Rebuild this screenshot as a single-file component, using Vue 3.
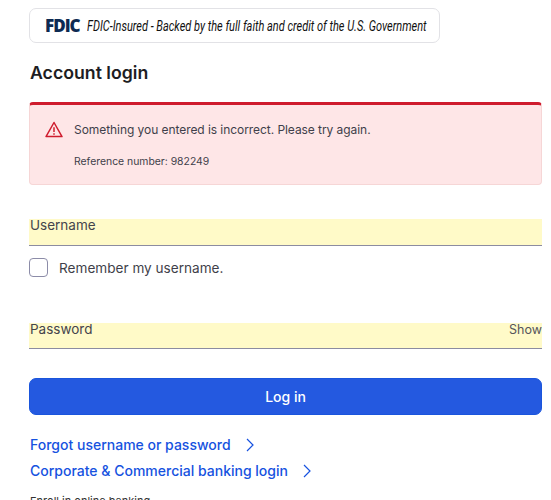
<template>
  <div class="page">
    <div class="fdic-banner">
      <span class="fdic-logo">FDIC</span>
      <span class="fdic-text">FDIC-Insured - Backed by the full faith and credit of the U.S. Government</span>
    </div>

    <h1 class="title">Account login</h1>

    <div class="alert">
      <svg class="alert-icon" width="18" height="17" viewBox="0 0 18 17" fill="none">
        <path d="M9 1.5L17 15.6H1L9 1.5Z" stroke="#cf1c2e" stroke-width="1.5" stroke-linejoin="round" />
        <path d="M9 6.2V11" stroke="#cf1c2e" stroke-width="1.5" />
        <path d="M9 12.2V13.8" stroke="#cf1c2e" stroke-width="1.5" />
      </svg>
      <div class="alert-body">
        <p class="alert-msg">{{ errorMessage }}</p>
        <p class="alert-ref">Reference number: {{ referenceNumber }}</p>
      </div>
    </div>

    <div class="field">
      <span class="field-label">Username</span>
    </div>

    <label class="remember">
      <span class="check"></span>
      <span>Remember my username.</span>
    </label>

    <div class="field field-password">
      <span class="field-label">Password</span>
      <span class="show">Show</span>
    </div>

    <button class="login-btn" type="button">Log in</button>

    <div class="links">
      <a v-for="link in links" :key="link" class="link" href="#" @click.prevent>
        {{ link }}
        <svg width="8" height="14" viewBox="0 0 8 14" fill="none">
          <path d="M1 1L7 7L1 13" stroke="currentColor" stroke-width="1.2" />
        </svg>
      </a>
    </div>

    <p class="enroll">Enroll in online banking</p>
  </div>
</template>

<script setup>
const errorMessage = "Something you entered is incorrect. Please try again.";
const referenceNumber = "982249";
const links = ["Forgot username or password", "Corporate & Commercial banking login"];
</script>

<style>
html,
body {
  margin: 0;
  height: 500px;
  overflow: hidden;
  background: #fff;
}
</style>

<style scoped>
.page {
  width: 513px;
  height: 500px;
  overflow: hidden;
  box-sizing: border-box;
  margin-left: 29px;
  padding-top: 8px;
  font-family: Inter, "Liberation Sans", sans-serif;
  color: #3f3f4a;
}

.fdic-banner {
  width: 411px;
  height: 35px;
  box-sizing: border-box;
  border: 1px solid #e2e2e6;
  border-radius: 7px;
  display: flex;
  align-items: center;
  padding-left: 15px;
  gap: 7px;
}
.fdic-logo {
  font-family: "Open Sans", sans-serif;
  font-weight: 800;
  font-size: 17px;
  letter-spacing: -1px;
  color: #0d2a52;
}
.fdic-text {
  font-family: Roboto, "Liberation Sans", sans-serif;
  font-style: italic;
  font-size: 14px;
  color: #111;
  white-space: nowrap;
  display: inline-block;
  transform: scaleX(0.785);
  transform-origin: left center;
}

.title {
  margin: 18px 0 0;
  padding-left: 1px;
  font-size: 17.7px;
  line-height: 24px;
  font-weight: 600;
  color: #1d1d22;
}

.alert {
  margin-top: 17px;
  height: 83px;
  box-sizing: border-box;
  background: #fee6e7;
  border: 1px solid #f6d6d6;
  border-top: 3px solid #cf1c2e;
  border-radius: 4px;
  display: flex;
  padding: 15px 15px 0;
  gap: 11px;
}
.alert-icon {
  flex: none;
  margin-top: 1px;
}
.alert-body p {
  margin: 0;
  white-space: nowrap;
}
.alert-msg {
  font-size: 12px;
  letter-spacing: -0.06px;
  line-height: 20px;
}
.alert-ref {
  padding-top: 15px;
  font-size: 10.4px;
  line-height: 14px;
}

.field {
  margin-top: 34px;
  height: 27px;
  box-sizing: border-box;
  background: #fffac8;
  border-bottom: 1px solid #8c8ca0;
  display: flex;
  justify-content: space-between;
  font-size: 13.5px;
  line-height: 13px;
}
.field-password {
  margin-top: 46px;
  height: 26px;
}
.field-label {
  padding-left: 1px;
  color: #44444c;
}
.show {
  font-size: 12.5px;
  color: #55555c;
}

.remember {
  display: flex;
  align-items: center;
  gap: 11px;
  margin-top: 12px;
  font-size: 13.6px;
}
.check {
  width: 17px;
  height: 17px;
  border: 1px solid #8c8ca8;
  border-radius: 4px;
  background: #fff;
}

.login-btn {
  display: block;
  width: 100%;
  height: 37px;
  margin-top: 29px;
  border: 1px solid #1a55dc;
  border-radius: 7px;
  background: #2459e0;
  color: #fff;
  font-family: inherit;
  font-size: 14px;
  font-weight: 500;
}

.links {
  margin-top: 21px;
  padding-left: 1px;
  display: flex;
  flex-direction: column;
  gap: 8px;
}
.link {
  display: flex;
  align-items: center;
  gap: 15px;
  color: #1652e0;
  font-size: 14px;
  font-weight: 500;
  line-height: 18px;
  text-decoration: none;
}

.enroll {
  margin: 14px 0 0;
  padding-left: 1px;
  font-size: 11px;
  color: #333;
}
</style>
